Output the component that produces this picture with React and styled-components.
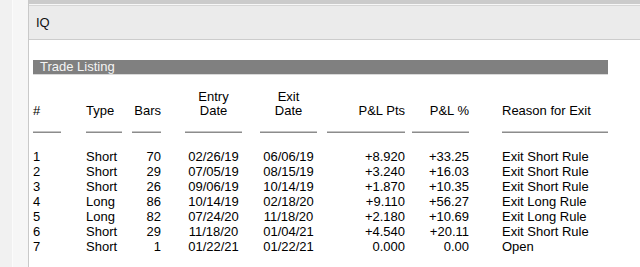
import styled, { createGlobalStyle } from "styled-components";

const GlobalStyle = createGlobalStyle`
  html, body {
    margin: 0;
    padding: 0;
    background: #ffffff;
  }
  body {
    font-family: "Liberation Sans", Arial, Helvetica, sans-serif;
    font-size: 13px;
    color: #000;
  }
`;

const Page = styled.div`
  display: flex;
  height: 100vh;
  overflow: hidden;
`;

const Sidebar = styled.div`
  width: 28px;
  flex-shrink: 0;
  border-right: 1px solid #c9c9c9;
  background: linear-gradient(
    to right,
    #f1f1f1 0 12px,
    #fbfbfb 12px 13px,
    #f6f6f6 13px
  );
`;

const Main = styled.div`
  flex: 1;
  display: flex;
  flex-direction: column;
  background: #fff;
`;

const TopStrip = styled.div`
  height: 4px;
  background: #cbcbcb;
  border-bottom: 1px solid #f7f7f7;
`;

const Header = styled.div`
  height: 33px;
  display: flex;
  align-items: center;
  padding-left: 7px;
  background: #ebebeb;
  border-top: 1px solid #d6d6d6;
  border-bottom: 1px solid #cccccc;
`;

const Symbol = styled.div`
  font-size: 13px;
  font-weight: 500;
  color: #111;
`;

const Content = styled.div`
  padding: 20px 0 0 4px;
  width: 575px;
`;

const SectionBar = styled.div`
  height: 14px;
  line-height: 14px;
  padding-left: 7px;
  background: #808080;
  border-bottom: 1px solid #d9d9d9;
  color: #f4f4f4;
  font-size: 13px;
`;

const Grid = styled.div`
  display: grid;
  grid-template-columns: ${(p) => p.$cols};
  align-items: end;
  margin-top: ${(p) => p.$top}px;
  line-height: ${(p) => p.$lh}px;
`;

const Cell = styled.div`
  padding-left: ${(p) => p.$gap}px;
  text-align: ${(p) => p.$align};
  white-space: nowrap;
`;

const Rule = styled.div`
  margin-left: ${(p) => p.$gap}px;
  height: 2px;
  background: #8c8c8c;
  border-top: 1px solid #c4c4c4;
  box-sizing: border-box;
`;

const columns = [
  { key: "n", head: ["#"], gap: 0, width: 28, align: "left" },
  { key: "type", head: ["Type"], gap: 25, width: 36, align: "left" },
  { key: "bars", head: ["Bars"], gap: 10, width: 29, align: "right" },
  { key: "entry", head: ["Entry", "Date"], gap: 24, width: 57, align: "center" },
  { key: "exit", head: ["Exit", "Date"], gap: 18, width: 57, align: "center" },
  { key: "pts", head: ["P&L Pts"], gap: 10, width: 78, align: "right" },
  { key: "pct", head: ["P&L %"], gap: 7, width: 57, align: "right" },
  { key: "reason", head: ["Reason for Exit"], gap: 33, width: 106, align: "left" },
];

const trades = [
  { n: "1", type: "Short", bars: "70", entry: "02/26/19", exit: "06/06/19", pts: "+8.920", pct: "+33.25", reason: "Exit Short Rule" },
  { n: "2", type: "Short", bars: "29", entry: "07/05/19", exit: "08/15/19", pts: "+3.240", pct: "+16.03", reason: "Exit Short Rule" },
  { n: "3", type: "Short", bars: "26", entry: "09/06/19", exit: "10/14/19", pts: "+1.870", pct: "+10.35", reason: "Exit Short Rule" },
  { n: "4", type: "Long", bars: "86", entry: "10/14/19", exit: "02/18/20", pts: "+9.110", pct: "+56.27", reason: "Exit Long Rule" },
  { n: "5", type: "Long", bars: "82", entry: "07/24/20", exit: "11/18/20", pts: "+2.180", pct: "+10.69", reason: "Exit Long Rule" },
  { n: "6", type: "Short", bars: "29", entry: "11/18/20", exit: "01/04/21", pts: "+4.540", pct: "+20.11", reason: "Exit Short Rule" },
  { n: "7", type: "Short", bars: "1", entry: "01/22/21", exit: "01/22/21", pts: "0.000", pct: "0.00", reason: "Open" },
];

const cols = columns.map((c) => `${c.gap + c.width}px`).join(" ");

export default function App() {
  return (
    <>
      <GlobalStyle />
      <Page>
        <Sidebar />
        <Main>
          <TopStrip />
          <Header>
            <Symbol>IQ</Symbol>
          </Header>
          <Content>
            <SectionBar>Trade Listing</SectionBar>

            <Grid $cols={cols} $top={15} $lh={14}>
              {columns.map((c) => (
                <Cell key={c.key} $gap={c.gap} $align={c.align}>
                  {c.head.map((line, i) => (
                    <div key={i}>{line}</div>
                  ))}
                </Cell>
              ))}
            </Grid>

            <Grid $cols={cols} $top={13} $lh={2}>
              {columns.map((c) => (
                <Rule key={c.key} $gap={c.gap} />
              ))}
            </Grid>

            <Grid $cols={cols} $top={16} $lh={15}>
              {trades.map((t) =>
                columns.map((c) => (
                  <Cell key={t.n + c.key} $gap={c.gap} $align={c.align}>
                    {t[c.key]}
                  </Cell>
                ))
              )}
            </Grid>
          </Content>
        </Main>
      </Page>
    </>
  );
}
